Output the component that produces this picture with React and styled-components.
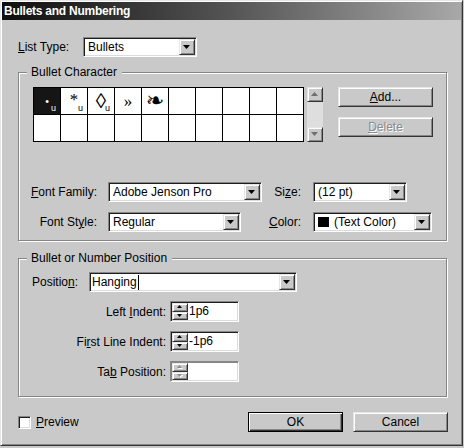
import React from "react";
import styled, { createGlobalStyle } from "styled-components";

const FACE = "#c9c9c9";
const DARK = "#333333";
const SHADE = "#878787";
const LIGHT = "#e6e6e6";

const GlobalStyle = createGlobalStyle`
  * { box-sizing: border-box; }
  html, body { margin: 0; padding: 0; background: ${FACE}; }
  body {
    font-family: "Liberation Sans", Arial, sans-serif;
    font-size: 12px;
    color: #000;
  }
`;

const Window = styled.div`
  width: 463px;
  height: 446px;
  background: ${FACE};
  border: 1px solid;
  border-color: ${LIGHT} ${DARK} ${DARK} ${LIGHT};
  box-shadow: inset 1px 1px 0 #fff, inset -1px -1px 0 ${SHADE};
  padding: 1px;
  display: flex;
  flex-direction: column;
`;

const TitleBar = styled.div`
  flex: none;
  height: 18px;
  padding: 1px 0 0 2px;
  line-height: 17px;
  background: linear-gradient(to right, #0e0e0e 0%, #555 50%, #a8a8a8 100%);
  color: #fff;
  font-weight: bold;
  font-size: 12px;
  letter-spacing: -0.25px;
  white-space: nowrap;
`;

const Body = styled.div`
  display: flex;
  flex-direction: column;
  padding: 17px 13px 0 16px;
`;

const Key = styled.span`
  text-decoration: underline;
  text-underline-offset: 1px;
`;

const Row = styled.div`
  display: flex;
  align-items: center;
  height: ${(p) => p.$h || 20}px;
  margin-top: ${(p) => p.$mt || 0}px;
  padding-left: ${(p) => p.$pl || 0}px;
`;

const Label = styled.span`
  flex: none;
  width: ${(p) => p.$w}px;
  text-align: ${(p) => (p.$right ? "right" : "left")};
  white-space: nowrap;
`;

/* ---------- group box ---------- */
const Group = styled.div`
  position: relative;
  width: 429px;
  margin-top: ${(p) => p.$mt}px;
  padding: ${(p) => p.$pad};
  border: 1px solid #858585;
  box-shadow: inset 1px 1px 0 #fff, 1px 1px 0 #fff;
`;

const Legend = styled.span`
  position: absolute;
  top: -8px;
  left: 8px;
  padding: 0 5px 0 4px;
  line-height: 14px;
  background: ${FACE};
  white-space: nowrap;
`;

/* ---------- triangle glyph ---------- */
const TriSvg = styled.svg`
  display: block;
  flex: none;
`;

const Tri = ({ up, w = 7, h = 4, color = "#000", emboss }) => {
  const pts = up ? `0,${h} ${w},${h} ${w / 2},0` : `0,0 ${w},0 ${w / 2},${h}`;
  return (
    <TriSvg width={w + 1} height={h + 1} viewBox={`0 0 ${w + 1} ${h + 1}`}>
      {emboss && <polygon points={pts} fill="#fff" transform="translate(1,1)" />}
      <polygon points={pts} fill={color} />
    </TriSvg>
  );
};

/* ---------- raised / sunken pieces ---------- */
const RaisedBox = styled.div`
  flex: none;
  display: flex;
  align-items: center;
  justify-content: center;
  background: ${FACE};
  border: 1px solid;
  border-color: ${LIGHT} ${DARK} ${DARK} ${LIGHT};
  box-shadow: inset 1px 1px 0 #fff, inset -1px -1px 0 ${SHADE};
`;

const DropBtn = styled(RaisedBox)`
  width: 16px;
  height: 16px;
`;

const Combo = styled.div`
  flex: none;
  display: flex;
  width: ${(p) => p.$w}px;
  height: 20px;
  margin-left: ${(p) => p.$ml || 0}px;
  padding: 1px;
  background: #fff;
  border: 1px solid;
  border-color: ${SHADE} #fff #fff ${SHADE};
  box-shadow: inset 1px 1px 0 #1e1e1e, inset -1px -1px 0 #dcdcdc;
`;

const ComboText = styled.div`
  flex: 1;
  display: flex;
  align-items: center;
  padding-left: ${(p) => (p.$pl != null ? p.$pl : 3)}px;
  line-height: 16px;
  white-space: nowrap;
  overflow: hidden;
`;

const Swatch = styled.span`
  flex: none;
  width: 11px;
  height: 10px;
  margin-right: 5px;
  background: #000;
`;

const Caret = styled.span`
  display: inline-block;
  width: 1px;
  height: 15px;
  margin-left: 1px;
  background: #000;
`;

const Select = ({ w, ml, pl, swatch, caret, children }) => (
  <Combo $w={w} $ml={ml}>
    <ComboText $pl={pl}>
      {swatch && <Swatch />}
      {children}
      {caret && <Caret />}
    </ComboText>
    <DropBtn>
      <Tri />
    </DropBtn>
  </Combo>
);

/* ---------- character grid ---------- */
const TopRow = styled.div`
  display: flex;
  align-items: flex-start;
  padding-left: 14px;
`;

const CharGrid = styled.div`
  flex: none;
  display: grid;
  grid-template-columns: repeat(10, 26px);
  grid-auto-rows: 26px;
  gap: 1px;
  padding: 1px;
  background: #000;
`;

const Cell = styled.div`
  position: relative;
  display: flex;
  align-items: center;
  justify-content: center;
  background: ${(p) => (p.$sel ? "#151515" : "#fff")};
  color: ${(p) => (p.$sel ? "#fff" : "#000")};
  font-family: "Liberation Serif", "DejaVu Serif", "DejaVu Sans", serif;
  line-height: 1;
`;

const Glyph = styled.span`
  font-size: ${(p) => p.$size}px;
  margin-top: ${(p) => p.$dy || 0}px;
`;

const UniMark = styled.span`
  position: absolute;
  right: 4px;
  bottom: 1px;
  font-family: "Liberation Sans", Arial, sans-serif;
  font-size: 9px;
  line-height: 1;
`;

const Scroll = styled.div`
  flex: none;
  display: flex;
  flex-direction: column;
  width: 16px;
  height: 55px;
  margin-left: 3px;
  background: #dedede;
`;

const ScrollBtn = styled(RaisedBox)`
  width: 16px;
  height: 15px;
`;

const Track = styled.div`
  flex: 1;
`;

const ButtonCol = styled.div`
  flex: none;
  display: flex;
  flex-direction: column;
  gap: 10px;
  margin-left: 15px;
`;

const Button = styled.div`
  flex: none;
  width: 95px;
  height: 20px;
  margin-left: ${(p) => p.$ml || 0}px;
  display: flex;
  align-items: center;
  justify-content: center;
  background: ${FACE};
  border: 1px solid;
  border-color: ${(p) => (p.$default ? "#000" : `${LIGHT} ${DARK} ${DARK} ${LIGHT}`)};
  box-shadow: ${(p) =>
    p.$default
      ? `inset 1px 1px 0 #fff, inset -1px -1px 0 ${DARK}, inset -2px -2px 0 ${SHADE}`
      : `inset 1px 1px 0 #fff, inset -1px -1px 0 ${SHADE}`};
  color: ${(p) => (p.$disabled ? "#8a8a8a" : "#000")};
  text-shadow: ${(p) => (p.$disabled ? "1px 1px 0 #fff" : "none")};
  white-space: nowrap;
`;

/* ---------- font grid ---------- */
const FontGrid = styled.div`
  display: grid;
  grid-template-columns: 78px 165px 39px 131px;
  grid-auto-rows: 20px;
  row-gap: 10px;
  align-items: center;
  margin-top: 40px;
`;

/* ---------- spinner ---------- */
const Spin = styled.div`
  flex: none;
  display: flex;
  width: 69px;
  height: 21px;
  margin-left: 4px;
  padding: 1px;
  background: #fff;
  border: 1px solid;
  border-color: ${SHADE} #fff #fff ${SHADE};
  box-shadow: inset 1px 1px 0 ${(p) => (p.$disabled ? SHADE : "#1e1e1e")},
    inset -1px -1px 0 #dcdcdc;
`;

const SpinBtns = styled.div`
  flex: none;
  width: 16px;
  display: flex;
  flex-direction: column;
`;

const SpinBtn = styled(RaisedBox)`
  flex: 1;
`;

const SpinText = styled.div`
  flex: 1;
  padding-left: 1px;
  line-height: 17px;
  white-space: nowrap;
`;

const Spinner = ({ value, disabled }) => (
  <Spin $disabled={disabled}>
    <SpinBtns>
      <SpinBtn>
        <Tri up w={5} h={3} color={disabled ? "#8a8a8a" : "#000"} emboss={disabled} />
      </SpinBtn>
      <SpinBtn>
        <Tri w={5} h={3} color={disabled ? "#8a8a8a" : "#000"} emboss={disabled} />
      </SpinBtn>
    </SpinBtns>
    <SpinText>{value}</SpinText>
  </Spin>
);

/* ---------- footer ---------- */
const Footer = styled.div`
  display: flex;
  align-items: center;
  height: 20px;
  margin-top: 15px;
`;

const CheckBox = styled.span`
  flex: none;
  width: 13px;
  height: 13px;
  background: #fff;
  border: 1px solid;
  border-color: ${SHADE} #fff #fff ${SHADE};
  box-shadow: inset 1px 1px 0 #1e1e1e, inset -1px -1px 0 #dcdcdc;
`;

const CheckLabel = styled.span`
  margin-left: 5px;
`;

const Spacer = styled.div`
  flex: 1;
`;

const cells = [
  { g: "•", size: 12, u: true, sel: true, dy: 2 },
  { g: "*", size: 17, u: true, dy: -3 },
  { g: "◊", size: 21, u: true },
  { g: "»", size: 17 },
  { g: "❧", size: 22, dy: -1 },
];

export default function App() {
  const all = Array.from({ length: 20 }, (_, i) => cells[i] || null);
  return (
    <>
      <GlobalStyle />
      <Window>
        <TitleBar>Bullets and Numbering</TitleBar>
        <Body>
          <Row>
            <Label $w={65}>
              <Key>L</Key>ist Type:
            </Label>
            <Select w={114}>Bullets</Select>
          </Row>

          <Group $mt={15} $pad="14px 0 8px 0">
            <Legend>Bullet Character</Legend>
            <TopRow>
              <CharGrid>
                {all.map((c, i) => (
                  <Cell key={i} $sel={c && c.sel}>
                    {c && (
                      <Glyph $size={c.size} $dy={c.dy}>
                        {c.g}
                      </Glyph>
                    )}
                    {c && c.u && <UniMark>u</UniMark>}
                  </Cell>
                ))}
              </CharGrid>
              <Scroll>
                <ScrollBtn>
                  <Tri up color="#6e6e6e" />
                </ScrollBtn>
                <Track />
                <ScrollBtn>
                  <Tri color="#6e6e6e" />
                </ScrollBtn>
              </Scroll>
              <ButtonCol>
                <Button>
                  <Key>A</Key>dd...
                </Button>
                <Button $disabled>
                  <Key>D</Key>elete
                </Button>
              </ButtonCol>
            </TopRow>

            <FontGrid>
              <Label $right>
                <Key>F</Key>ont Family:
              </Label>
              <Select w={154} ml={11}>
                Adobe Jenson Pro
              </Select>
              <Label $right>
                Si<Key>z</Key>e:
              </Label>
              <Select w={94} ml={12}>
                (12 pt)
              </Select>

              <Label $right>
                Font St<Key>y</Key>le:
              </Label>
              <Select w={133} ml={11}>
                Regular
              </Select>
              <Label $right>
                <Key>C</Key>olor:
              </Label>
              <Select w={119} ml={12} swatch>
                (Text Color)
              </Select>
            </FontGrid>
          </Group>

          <Group $mt={17} $pad="13px 0 14px 0">
            <Legend>Bullet or Number Position</Legend>
            <Row $pl={13}>
              <Label $w={57}>
                Positio<Key>n</Key>:
              </Label>
              <Select w={208} pl={1} caret>
                Hanging
              </Select>
            </Row>
            <Row $h={21} $mt={9}>
              <Label $w={147} $right>
                Left <Key>I</Key>ndent:
              </Label>
              <Spinner value="1p6" />
            </Row>
            <Row $h={21} $mt={9}>
              <Label $w={147} $right>
                Fi<Key>r</Key>st Line Indent:
              </Label>
              <Spinner value="-1p6" />
            </Row>
            <Row $h={21} $mt={9}>
              <Label $w={147} $right>
                Ta<Key>b</Key> Position:
              </Label>
              <Spinner value="" disabled />
            </Row>
          </Group>

          <Footer>
            <CheckBox />
            <CheckLabel>
              <Key>P</Key>review
            </CheckLabel>
            <Spacer />
            <Button $default>OK</Button>
            <Button $ml={10}>Cancel</Button>
          </Footer>
        </Body>
      </Window>
    </>
  );
}
